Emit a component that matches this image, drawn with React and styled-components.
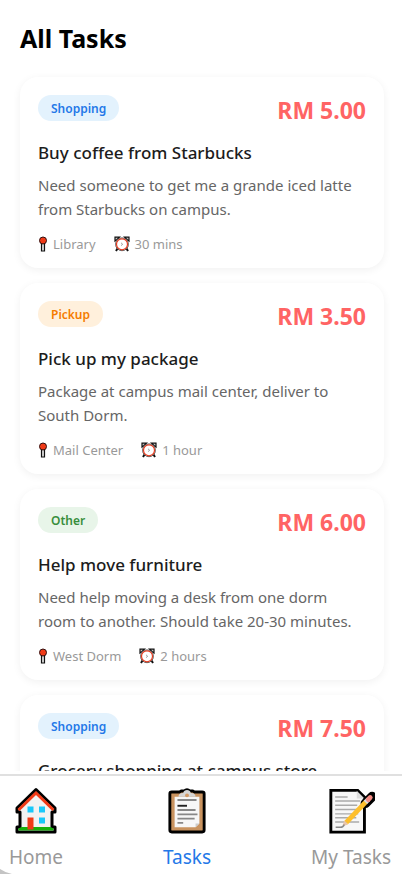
import React from "react";
import styled, { createGlobalStyle } from "styled-components";

const GlobalStyle = createGlobalStyle`
  * { box-sizing: border-box; }
  body { margin: 0; background: #fff; font-family: "Noto Sans", "Open Sans", sans-serif; }
`;

const Screen = styled.div`
  display: flex;
  flex-direction: column;
  height: 100vh;
  background: #fff;
  position: relative;
`;

const Content = styled.main`
  flex: 1;
  min-height: 0;
  overflow-y: auto;
  scrollbar-width: none;
  padding: 20px 18px 0 20px;
`;

const Heading = styled.h1`
  margin: 0 0 20px;
  font-size: 25px;
  line-height: 37px;
  font-weight: 700;
  color: #000;
`;

const TaskList = styled.div`
  display: flex;
  flex-direction: column;
  gap: 15px;
`;

const Card = styled.article`
  padding: 18px 18px 14px;
  border-radius: 18px;
  background: #fff;
  box-shadow: 0 2px 9px rgba(0, 0, 0, 0.06);
`;

const CardTop = styled.div`
  display: flex;
  justify-content: space-between;
  align-items: flex-start;
  margin-bottom: 11px;
`;

const tones = {
  Shopping: ["#e3f2fd", "#2478e8"],
  Pickup: ["#fff0dc", "#f57c00"],
  Other: ["#e8f5e9", "#388e3c"],
};

const Tag = styled.span`
  padding: 2px 13px 0;
  border-radius: 13px;
  font-size: 12px;
  line-height: 24px;
  font-weight: 600;
  background: ${(p) => tones[p.$kind][0]};
  color: ${(p) => tones[p.$kind][1]};
`;

const Price = styled.span`
  font-size: 23px;
  line-height: 31px;
  font-weight: 700;
  color: #ff6464;
`;

const Title = styled.h2`
  margin: 0 0 4px;
  font-size: 17px;
  line-height: 32px;
  font-weight: 500;
  color: #1c1c1c;
  white-space: nowrap;
`;

const Description = styled.p`
  margin: 0 0 13px;
  font-size: 15px;
  line-height: 24px;
  color: #666;
`;

const Meta = styled.div`
  display: flex;
  gap: 18px;
  font-size: 13px;
  line-height: 20px;
  color: #999;
`;

const MetaItem = styled.span`
  display: flex;
  align-items: center;
  gap: 5px;
`;

const Nav = styled.nav`
  display: flex;
  justify-content: space-between;
  margin-top: 3px;
  height: 100px;
  padding: 11px 11px 0 9px;
  border-top: 2px solid #e0e0e0;
`;

const NavButton = styled.button`
  display: flex;
  flex-direction: column;
  align-items: center;
  gap: 8px;
  padding: 0;
  border: 0;
  background: none;
  font: inherit;
  font-size: 19px;
  line-height: 28px;
  white-space: nowrap;
  color: ${(p) => (p.$active ? "#2478e8" : "#999")};
`;

const CornerMark = styled.svg`
  position: absolute;
  left: 0;
  bottom: 0;
`;

const PinIcon = () => (
  <svg width="10" height="16" viewBox="0 0 10 16" aria-hidden="true">
    <path d="M3.500 7h3v8h-3z" fill="#ddd" stroke="#111" strokeWidth="1.200" />
    <circle cx="5" cy="4.500" r="3.500" fill="#f03a17" stroke="#301010" strokeWidth="1" />
  </svg>
);

const ClockIcon = () => (
  <svg width="16" height="16" viewBox="0 0 16 16" aria-hidden="true">
    <path d="M3.500 12.500l-1.500 2.500M12.500 12.500l1.500 2.500" stroke="#111" strokeWidth="2" />
    <path d="M1 5V1.200h4.500L3 3.500zM15 5V1.200h-4.500L13 3.500z" fill="#ccc" stroke="#111" strokeWidth="1.200" />
    <circle cx="8" cy="8.300" r="6.400" fill="#fff" stroke="#333" strokeWidth="0.800" />
    <circle cx="8" cy="8.300" r="5.500" fill="#fff" stroke="#e5391c" strokeWidth="1.200" />
    <path d="M7 6.800l1.700 1.500L7 9.600" fill="none" stroke="#888" strokeWidth="0.800" />
  </svg>
);

const HomeIcon = () => (
  <svg width="42" height="48" viewBox="0 0 42 48" aria-hidden="true">
    <path d="M21 2.500L40 21v4h-3v15h3v5H2v-5h3V25H2v-4z" fill="#f2f2f2" stroke="#000" strokeWidth="3" strokeLinejoin="round" />
    <path d="M3.500 23L21 6l17.500 17" fill="none" stroke="#f03a17" strokeWidth="3" />
    <path d="M3.500 43.500v-2l3-1.500h29l3 1.500v2z" fill="#16b00c" />
    <path d="M12.500 30.500h6v12h-6z" fill="#f03a17" />
    <path d="M12.500 19.500h6v6h-6zM24 19.500h6v6h-6zM24 30.500h6v6h-6z" fill="#19c8fa" />
  </svg>
);

const ClipboardIcon = () => (
  <svg width="40" height="48" viewBox="0 0 42 48" preserveAspectRatio="xMidYMid meet" aria-hidden="true">
    <path d="M5 4h8l2-1h3q3-3 6 0h3l2 1h8q2 0 2 2v38q0 2-2 2H5q-2 0-2-2V6q0-2 2-2z" fill="#c9935f" stroke="#000" strokeWidth="3" />
    <path d="M8 9h26v28l-4 4H8z" fill="#f7f7f7" />
    <path d="M30 41v-4h4z" fill="#ccc" />
    <path d="M12 9q0-4 5-4 1-3 4-3t4 3q5 0 5 4z" fill="#d5d5d5" />
    <circle cx="21" cy="7.500" r="2" fill="#d39a65" />
    <path d="M11 12.500h20M11 23h19M11 27.500h21M11 32h18M11 36.500h6" stroke="#888" strokeWidth="2" />
    <path d="M11 18.500h10" stroke="#222" strokeWidth="2" />
  </svg>
);

const MemoIcon = () => (
  <svg width="48" height="48" viewBox="0 0 50 48" aria-hidden="true">
    <path d="M4 2.500h28l7 7V46H4z" fill="#f7f7f7" stroke="#000" strokeWidth="3" />
    <path d="M31 3v8h8z" fill="#ddd" />
    <path d="M8.500 9.500h13M8.500 13.500h26M8.500 18h23M8.500 22.500h25M8.500 27h24M8.500 31h22M8.500 35.500h25" stroke="#aaa" strokeWidth="1.500" />
    <path d="M40 16L47 9" stroke="#000" strokeWidth="10" strokeLinecap="round" />
    <path d="M20 36l21-22" stroke="#fdbf2d" strokeWidth="5" />
    <path d="M40 15l3-3" stroke="#ddd" strokeWidth="5" />
    <path d="M43 12l2-2" stroke="#f58c84" strokeWidth="5" strokeLinecap="round" />
    <path d="M18 34l4 4-6 2z" fill="#e9c4aa" />
    <path d="M9 41h5q3 0 4-3" fill="none" stroke="#888" strokeWidth="1.500" />
  </svg>
);

const tasks = [
  { kind: "Shopping", price: "RM 5.00", title: "Buy coffee from Starbucks", text: "Need someone to get me a grande iced latte from Starbucks on campus.", place: "Library", time: "30 mins" },
  { kind: "Pickup", price: "RM 3.50", title: "Pick up my package", text: "Package at campus mail center, deliver to South Dorm.", place: "Mail Center", time: "1 hour" },
  { kind: "Other", price: "RM 6.00", title: "Help move furniture", text: "Need help moving a desk from one dorm room to another. Should take 20-30 minutes.", place: "West Dorm", time: "2 hours" },
  { kind: "Shopping", price: "RM 7.50", title: "Grocery shopping at campus store" },
];

const TaskCard = ({ task }) => (
  <Card>
    <CardTop>
      <Tag $kind={task.kind}>{task.kind}</Tag>
      <Price>{task.price}</Price>
    </CardTop>
    <Title>{task.title}</Title>
    {task.text && <Description>{task.text}</Description>}
    {task.place && (
      <Meta>
        <MetaItem><PinIcon />{task.place}</MetaItem>
        <MetaItem><ClockIcon />{task.time}</MetaItem>
      </Meta>
    )}
  </Card>
);

export default function App() {
  return (
    <>
      <GlobalStyle />
      <Screen>
        <Content>
          <Heading>All Tasks</Heading>
          <TaskList>
            {tasks.map((task) => <TaskCard key={task.title} task={task} />)}
          </TaskList>
        </Content>
        <Nav>
          <NavButton type="button"><HomeIcon />Home</NavButton>
          <NavButton type="button" $active aria-current="page"><ClipboardIcon />Tasks</NavButton>
          <NavButton type="button"><MemoIcon />My Tasks</NavButton>
        </Nav>
        <CornerMark width="12" height="5" viewBox="0 0 12 5" aria-hidden="true">
          <path d="M0 0Q5 3.500 12 5H0z" fill="#c4c4c4" />
        </CornerMark>
      </Screen>
    </>
  );
}
